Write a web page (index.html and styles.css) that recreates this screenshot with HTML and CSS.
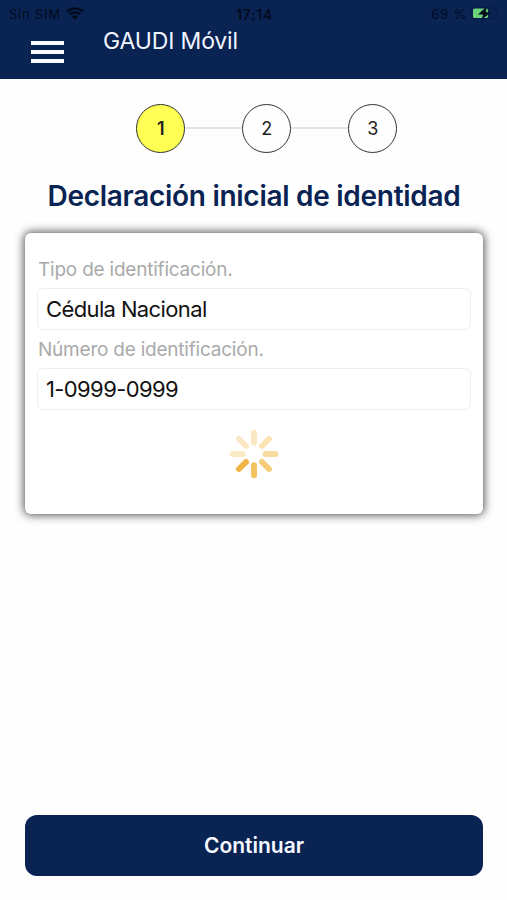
FILE: index.html
```html
<!DOCTYPE html>
<html lang="es">
<head>
<meta charset="utf-8">
<title>GAUDI Móvil</title>
<link rel="stylesheet" href="styles.css">
</head>
<body>
<div class="screen">
  <header class="header">
    <div class="status">
      <div class="status-left"><span class="carrier">Sin SIM</span>
        <svg class="wifi" viewBox="0 0 18 13" width="18" height="13"><path d="M1 4.6a11.5 11.5 0 0 1 16 0M3.7 7.5a7.6 7.6 0 0 1 10.6 0" fill="none" stroke="currentColor" stroke-width="2.4"/><path d="M5.9 9.7a4.5 4.5 0 0 1 6.2 0L9 12.8z" fill="currentColor"/></svg>
      </div>
      <span class="time">17:14</span>
      <div class="status-right"><span class="percent">69 %</span>
        <svg class="battery" viewBox="0 0 29 15" width="29" height="15"><rect x=".8" y="1.8" width="24.5" height="11" rx="3" fill="none" stroke="#061c47"/><path d="M27 5.5q2 1.8 0 3.6z" fill="#061c47"/><rect x="2" y="2.6" width="15" height="9.4" rx="1.5" fill="#6bd179"/><path d="M15.5 1 7.5 8.2h5L11 13l8.5-6.5h-5z" fill="#020b1d" stroke="#020b1d" stroke-width=".5"/></svg>
      </div>
    </div>
    <div class="titlebar">
      <div class="menu"><span></span><span></span><span></span></div>
      <div class="app-title">GAUDI Móvil</div>
    </div>
  </header>
  <main class="main">
    <div class="steps">
      <div class="step active">1</div><div class="line"></div><div class="step">2</div><div class="line"></div><div class="step">3</div>
    </div>
    <h1 class="heading">Declaración inicial de identidad</h1>
    <section class="card">
      <div class="label">Tipo de identificación.</div>
      <div class="field">Cédula Nacional</div>
      <div class="label">Número de identificación.</div>
      <div class="field">1-0999-0999</div>
      <svg class="spinner" viewBox="-25 -25 50 50" width="50" height="50" fill="none" stroke-width="6" stroke-linecap="round">
        <path d="M0-11.2V-21.3" stroke="#fae8c2"/>
        <path d="M8-8 15-15" stroke="#fae4b6"/>
        <path d="M11.5 0H21.5" stroke="#f7dc9f"/>
        <path d="M8 8 15 15" stroke="#f5ce7c"/>
        <path d="M0 11.2V21.3" stroke="#f2c35f"/>
        <path d="M-8 8-15 15" stroke="#f0b544"/>
        <path d="M-11.2 0H-21.3" stroke="#fae9c5"/>
        <path d="M-8-8-15-15" stroke="#fae8c4"/>
      </svg>
    </section>
  </main>
  <button class="continue">Continuar</button>
</div>
</body>
</html>
```
FILE: styles.css
```css
* { box-sizing: border-box; }
body { margin: 0; background: #fefefe; font-family: Inter, "Liberation Sans", sans-serif; color: #111; }
.screen { width: 507px; height: 900px; display: flex; flex-direction: column; background: #fefefe; overflow: hidden; }
.header { height: 79px; background: #092353; flex: none; }
.status { height: 28px; display: grid; grid-template-columns: 1fr auto 1fr; align-items: center; padding: 0 7px 0 9px; font-size: 13px; color: #020b1d; }
.status-left, .status-right { display: flex; align-items: center; gap: 5px; }
.status-right { justify-content: flex-end; gap: 4px; }
.carrier { letter-spacing: .75px; }
.wifi { margin-top: -2px; }
.battery { margin-top: -1px; }
.time { font-weight: 600; font-size: 14px; letter-spacing: .7px; }
.percent { letter-spacing: .8px; }
.titlebar { display: flex; padding-left: 31px; }
.menu { width: 33px; padding-top: 12.5px; display: flex; flex-direction: column; gap: 5.2px; }
.menu span { height: 4px; background: #f8faff; }
.app-title { margin-left: 39px; font-size: 23px; line-height: 26px; color: #f1f5ff; letter-spacing: -.15px; white-space: nowrap; }
.main { flex: 1; padding: 24.5px 24px 0 25px; }
.steps { display: flex; align-items: center; justify-content: center; padding-left: 25.5px; }
.step { flex: none; width: 49px; height: 49px; border: 1.5px solid #333; border-radius: 50%; display: flex; align-items: center; justify-content: center; font-size: 18px; color: #222; }
.active { background: #ffff54; font-weight: 600; }
.line { width: 57px; height: 2px; background: #e3e3e3; }
.heading { margin: 24.5px 0 0; height: 38px; line-height: 38px; font-size: 28px; font-weight: 600; letter-spacing: -.28px; color: #092353; text-align: center; white-space: nowrap; }
.card { margin-top: 18px; height: 281px; padding: 18px 12px 0; border-radius: 6px; background: #fff; box-shadow: 0 0 10px 1px rgba(0,0,0,.7); }
.label { height: 37px; padding-left: 1px; line-height: 37px; font-size: 19px; letter-spacing: -.22px; color: #aaa; white-space: nowrap; }
.field { height: 42px; margin-bottom: 1px; padding-left: 8px; line-height: 41px; border: 1px solid #eee; border-radius: 6px; font-size: 22px; letter-spacing: -.62px; color: #111; white-space: nowrap; }
.spinner { display: block; margin: 18.5px 0 0 192px; }
.continue { flex: none; width: 458px; height: 61px; margin: 0 0 24.5px 25px; padding: 0; border: 0; border-radius: 12px; background: #092353; color: #f5f8ff; font: 600 21px/61px Inter, sans-serif; }
```
